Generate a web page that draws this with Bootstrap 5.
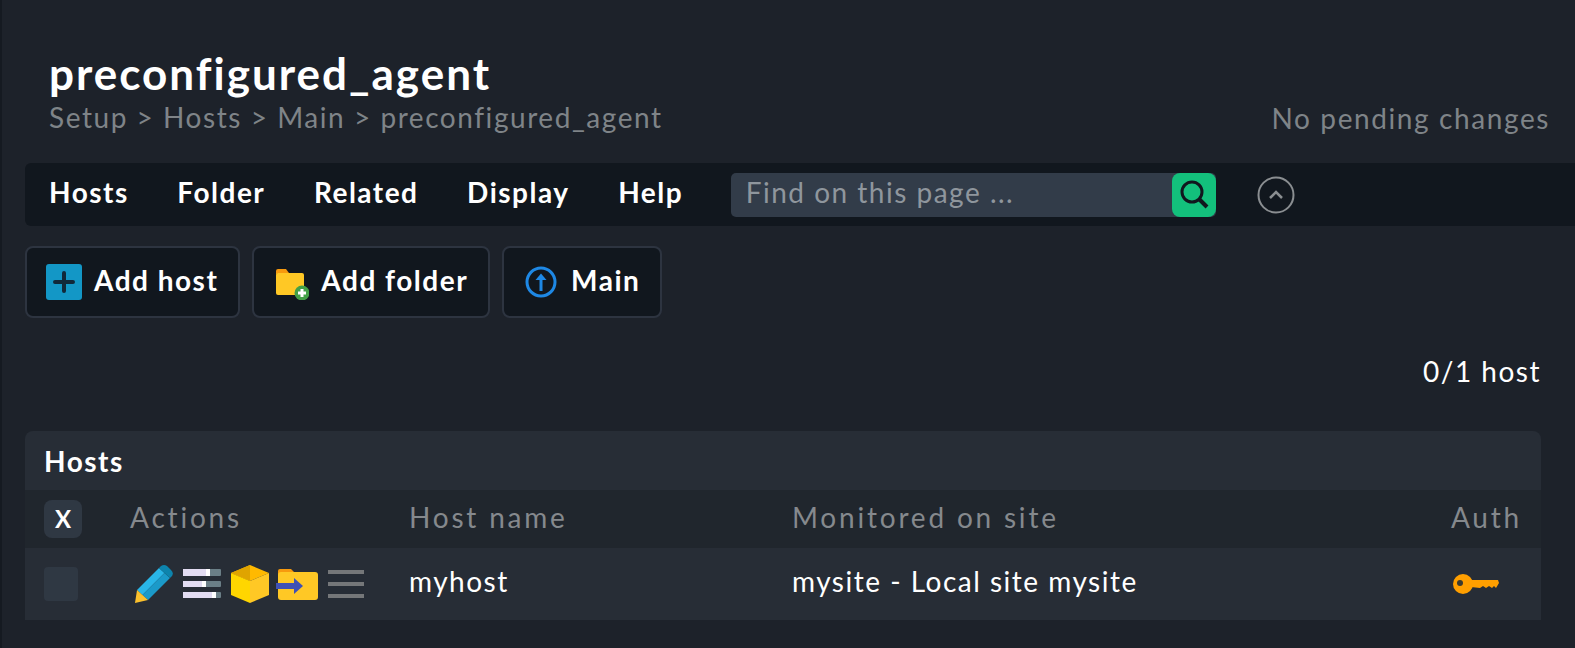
<!DOCTYPE html>
<html lang="en">
<head>
  <meta charset="UTF-8" />
  <meta name="viewport" content="width=device-width, initial-scale=1.0"/>
  <title>preconfigured_agent</title>
  <link href="https://cdn.jsdelivr.net/npm/bootstrap@5.3.0/dist/css/bootstrap.min.css" rel="stylesheet"/>
  <style>
    html, body { height: 100%; }
    body {
      background: #1d222a;
      border-left: 2px solid #151a21;
      color: #fff;
      font-family: Lato, "Liberation Sans", sans-serif;
      font-size: 28px;
      letter-spacing: 1.5px;
      overflow: hidden;
    }
    .page-head { padding: 50px 25px 0 47px; height: 163px; }
    .page-title { font-size: 44px; font-weight: 700; line-height: 46px; margin: 0; letter-spacing: 2px; }
    .crumbs { font-size: 28px; line-height: 34px; color: #7f8488; margin: 4px 0 0; letter-spacing: 1.55px; }
    .pending { font-size: 28px; line-height: 26px; color: #7f8488; letter-spacing: 1.6px; margin-top: 55px; }
    .menu-strip {
      background: #11171e;
      margin-left: 23px;
      height: 63px;
      border-radius: 6px 0 0 6px;
      padding-left: 24px;
    }
    .menu-item { font-weight: 700; margin-right: 48.6px; color: #fff; padding-bottom: 5px; }
    .find-box {
      width: 485px; height: 44px;
      background: #323c49;
      border-radius: 5px;
      margin-left: -1px;
      padding-left: 15px;
      overflow: hidden;
    }
    .find-text { color: #8f969d; padding-bottom: 5px; }
    .find-btn { width: 44px; height: 44px; background: #13c07c; border-radius: 8px; }
    .collapse-btn { margin-left: 41px; }
    .btn-row { margin: 20px 0 0 23px; gap: 12px; }
    .page-btn {
      height: 72px;
      background: #11171e;
      border: 2px solid #2d3440;
      border-radius: 8px;
      color: #fff;
      font-weight: 700;
      padding: 0 20px 0 19px;
      gap: 12px;
    }
    .page-btn span { padding-bottom: 4px; }
    .count-line { margin: 40px 34px 0 0; line-height: 26px; }
    .hosts-table { margin: 47px 34px 0 23px; }
    .hosts-title {
      height: 59px;
      background: #272d36;
      border-radius: 8px 8px 0 0;
      padding-left: 19px;
      font-weight: 700;
    }
    .hosts-head { height: 58px; background: #20262d; color: #85898d; letter-spacing: 2.8px; }
    .hosts-head > div:not(.cell-check) { padding-bottom: 5px; }
    .hosts-row { height: 72px; background: #272d36; }
    .row-text { padding-bottom: 7px; }
    .cell-check { width: 105px; padding-left: 19px; }
    .cell-actions { width: 279px; }
    .cell-name { width: 383px; }
    .x-btn {
      width: 38px; height: 38px;
      background: #2f3843;
      border-radius: 8px;
      color: #fff;
      font-weight: 700;
      font-size: 24px;
      letter-spacing: 0;
    }
    .check-box { width: 34px; height: 34px; background: #2f3843; border-radius: 4px; }
    .row-icons { padding-left: 5px; }
    .row-icons svg { display: block; }
    .icon-sliders { margin-left: 10px; }
    .icon-cube { margin-left: 10px; }
    .icon-folder { margin-left: 7px; }
    .icon-lines { margin-left: 10px; }
    .cell-auth { margin-left: auto; padding-right: 19px; }
    .key-wrap { padding-right: 42px; }
  </style>
</head>
<body>
  <div class="page-head d-flex justify-content-between align-items-start">
    <div>
      <h1 class="page-title">preconfigured_agent</h1>
      <p class="crumbs">Setup &gt; Hosts &gt; Main &gt; preconfigured_agent</p>
    </div>
    <div class="pending">No pending changes</div>
  </div>

  <div class="menu-strip d-flex align-items-center">
    <span class="menu-item">Hosts</span>
    <span class="menu-item">Folder</span>
    <span class="menu-item">Related</span>
    <span class="menu-item">Display</span>
    <span class="menu-item">Help</span>
    <div class="find-box d-flex align-items-center justify-content-between">
      <span class="find-text">Find on this page ...</span>
      <div class="find-btn d-flex align-items-center justify-content-center">
        <svg width="32" height="32" viewBox="0 0 32 32" fill="none" stroke="#11171e"><circle cx="14" cy="13" r="10" stroke-width="3"/><path d="M21 20l8 8" stroke-width="4"/></svg>
      </div>
    </div>
    <div class="collapse-btn">
      <svg class="d-block" width="38" height="38" viewBox="0 0 38 38" fill="none" stroke="#8a8e91" stroke-width="2"><circle cx="19" cy="19" r="17.5"/><path d="M13 22l6-6 6 6" stroke-width="2.5"/></svg>
    </div>
  </div>

  <div class="btn-row d-flex">
    <div class="page-btn d-flex align-items-center">
      <svg width="36" height="36" viewBox="0 0 36 36"><rect width="36" height="36" rx="3" fill="#1397c6"/><path d="M18 9v18M9 18h18" stroke="#11293a" stroke-width="4" stroke-linecap="round"/></svg>
      <span>Add host</span>
    </div>
    <div class="page-btn d-flex align-items-center">
      <svg width="36" height="36" viewBox="0 0 36 36"><path d="M3 7a2 2 0 0 1 2-2h8l3 4H5L3 11z" fill="#f79a0e"/><rect x="3" y="9" width="28" height="22" rx="2" fill="#ffc825"/><circle cx="29" cy="29" r="7.5" fill="#43a047"/><path d="M29 25v8M25 29h8" stroke="#fff" stroke-width="3"/></svg>
      <span>Add folder</span>
    </div>
    <div class="page-btn d-flex align-items-center">
      <svg width="36" height="36" viewBox="-1 -1 36 36" fill="none" stroke="#1e88e5"><circle cx="17" cy="17" r="14" stroke-width="3"/><path d="M17 26V13" stroke-width="3"/><path d="M11.5 15L17 8.5l5.500 6.500z" fill="#1e88e5" stroke="none"/></svg>
      <span>Main</span>
    </div>
  </div>

  <div class="count-line text-end">0/1 host</div>

  <div class="hosts-table">
    <div class="hosts-title d-flex align-items-center">Hosts</div>
    <div class="hosts-head d-flex align-items-center">
      <div class="cell-check"><div class="x-btn d-flex align-items-center justify-content-center">X</div></div>
      <div class="cell-actions">Actions</div>
      <div class="cell-name">Host name</div>
      <div>Monitored on site</div>
      <div class="cell-auth">Auth</div>
    </div>
    <div class="hosts-row d-flex align-items-center">
      <div class="cell-check"><div class="check-box"></div></div>
      <div class="cell-actions">
        <div class="row-icons d-flex align-items-center">
          <svg width="38" height="38" viewBox="0 0 38 38"><path d="M2 25L24 3l5.500 5L7.500 30z" fill="#29b6e8"/><path d="M7.500 30L29.500 8 35 13 13 35z" fill="#1b9ac9"/><path d="M24 3l2-2q3-2 6 0l4 4q3 3 1 6l-2 2z" fill="#0d84ad"/><path d="M2 25L0 38l13-3z" fill="#fbc02d"/></svg>
          <svg class="icon-sliders" width="38" height="30" viewBox="0 0 38 30"><rect y="0" width="38" height="7" rx="1" fill="#6b7f87"/><rect y="0" width="24" height="7" fill="#e2dcf2"/><rect x="23" width="4" height="7" fill="#fff"/><rect y="12" width="38" height="6" rx="1" fill="#6b7f87"/><rect y="12" width="20" height="6" fill="#e2dcf2"/><rect x="19" y="12" width="4" height="6" fill="#fff"/><rect y="23" width="38" height="6" rx="1" fill="#6b7f87"/><rect y="23" width="30" height="6" fill="#e2dcf2"/><rect x="29" y="23" width="4" height="6" fill="#fff"/></svg>
          <svg class="icon-cube" width="38" height="38" viewBox="0 0 38 38"><path d="M19 0l19 8-19 8L0 8z" fill="#ffb900"/><path d="M19 0v16L0 8z" fill="#dfa400"/><path d="M0 8l19 8v22L0 30z" fill="#ffd600"/><path d="M38 8L19 16v22l19-8z" fill="#ffc825"/></svg>
          <svg class="icon-folder" width="42" height="32" viewBox="0 0 42 32"><path d="M2 3a2 2 0 0 1 2-2h11l3 3v3H2z" fill="#f79a0e"/><rect x="2" y="4" width="40" height="28" rx="3" fill="#ffc825"/><path d="M0 15h18v-5l9 8-9 8v-5H0z" fill="#3f51b5"/></svg>
          <svg class="icon-lines" width="36" height="28" viewBox="0 0 36 28"><path d="M0 0h36v4H0zM0 12h36v4H0zM0 24h36v4H0z" fill="#757779"/></svg>
        </div>
      </div>
      <div class="cell-name row-text">myhost</div>
      <div class="row-text">mysite - Local site mysite</div>
      <div class="cell-auth key-wrap">
        <svg class="d-block" width="46" height="22" viewBox="0 0 46 22"><circle cx="10" cy="11" r="10" fill="#ff9f00"/><circle cx="7" cy="10" r="3" fill="#3a3a30"/><path d="M18 7h27l1 3-3 5-2-2-2 2-3-2-3 2-3-2-3 2-9-1z" fill="#ff9f00"/></svg>
      </div>
    </div>
  </div>
</body>
</html>
